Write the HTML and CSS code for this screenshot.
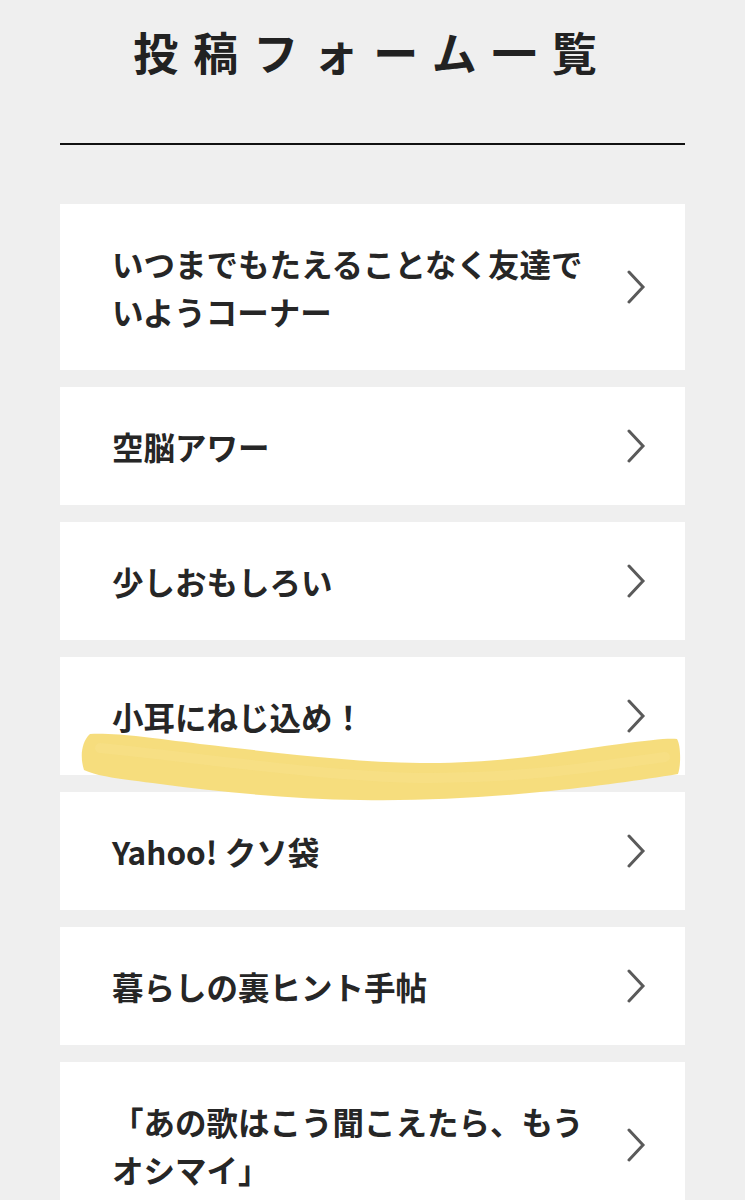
FILE: index.html
```html
<!DOCTYPE html>
<html lang="ja">
<head>
<meta charset="utf-8">
<title>投稿フォーム一覧</title>
<link rel="stylesheet" href="styles.css">
</head>
<body>
<div class="page">
  <header class="header">
    <h1 class="title">投稿フォーム一覧</h1>
  </header>
  <ul class="list">
    <li class="card"><span class="label">いつまでもたえることなく友達でいようコーナー</span><svg class="chev" viewBox="0 0 20 34"><polyline points="3,2 17,17 3,32"/></svg></li>
    <li class="card"><span class="label">空脳アワー</span><svg class="chev" viewBox="0 0 20 34"><polyline points="3,2 17,17 3,32"/></svg></li>
    <li class="card"><span class="label">少しおもしろい</span><svg class="chev" viewBox="0 0 20 34"><polyline points="3,2 17,17 3,32"/></svg></li>
    <li class="card"><span class="label">小耳にねじ込め！</span><svg class="chev" viewBox="0 0 20 34"><polyline points="3,2 17,17 3,32"/></svg></li>
    <li class="card"><span class="label">Yahoo! クソ袋</span><svg class="chev" viewBox="0 0 20 34"><polyline points="3,2 17,17 3,32"/></svg></li>
    <li class="card"><span class="label">暮らしの裏ヒント手帖</span><svg class="chev" viewBox="0 0 20 34"><polyline points="3,2 17,17 3,32"/></svg></li>
    <li class="card"><span class="label">「あの歌はこう聞こえたら、もうオシマイ」</span><svg class="chev" viewBox="0 0 20 34"><polyline points="3,2 17,17 3,32"/></svg></li>
  </ul>
  <svg class="marker" viewBox="0 0 745 1200">
    <path class="stroke" d="M90 734 C 120 733, 150 738, 200 744 C 280 753, 350 762, 420 763 C 500 764, 560 752, 620 744 C 650 740, 668 738, 677 739 C 681 745, 681 766, 678 774 C 640 780, 600 786, 540 792 C 480 798, 420 801, 360 800 C 290 799, 220 792, 160 784 C 120 779, 96 776, 84 770 C 80 758, 81 742, 90 734 Z"/>
    <path class="sheen" d="M100 748 C 200 758, 320 776, 420 778 C 520 779, 600 766, 665 757" />
  </svg>
</div>
</body>
</html>
```

FILE: styles.css
```css
html, body {
  margin: 0;
  padding: 0;
  background: #efefef;
}
body {
  font-family: "Noto Sans CJK JP", "Noto Sans", sans-serif;
  color: #222;
}
.page {
  position: relative;
  padding: 0 60px;
  height: 1200px;
  overflow: hidden;
}
.header {
  padding-top: 26px;
  border-bottom: 2px solid #111;
  padding-bottom: 65px;
}
.title {
  margin: 0;
  text-align: center;
  font-size: 45px;
  line-height: 52px;
  font-weight: 700;
  letter-spacing: 15px;
  color: #222;
}
.list {
  list-style: none;
  margin: 59px 0 0;
  padding: 0;
  display: flex;
  flex-direction: column;
  gap: 17px;
}
.card {
  background: #fff;
  display: flex;
  align-items: center;
  gap: 30px;
  padding: 35px 39px 35px 52px;
}
.label {
  flex: 1;
  font-size: 31.5px;
  line-height: 48px;
  font-weight: 700;
  color: #262626;
}
.chev {
  width: 20px;
  height: 34px;
  flex: none;
}
.chev polyline {
  fill: none;
  stroke: #5a5a5a;
  stroke-width: 3;
  stroke-linecap: round;
  stroke-linejoin: miter;
}
.marker {
  position: absolute;
  left: 0;
  top: 0;
  width: 745px;
  height: 1200px;
  pointer-events: none;
}
.marker .stroke {
  fill: #f6dc78;
  fill-opacity: 0.96;
}
.marker .sheen {
  fill: none;
  stroke: #f9e695;
  stroke-width: 10;
  stroke-opacity: 0.3;
  stroke-linecap: round;
}
```
